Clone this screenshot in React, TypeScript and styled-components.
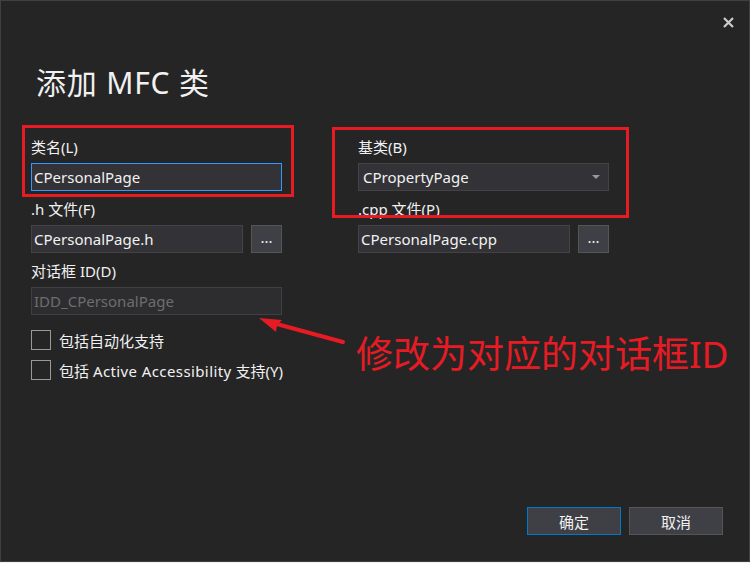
import * as React from "react";
import styled, { createGlobalStyle } from "styled-components";

const GlobalStyle = createGlobalStyle`
  html, body {
    margin: 0;
    padding: 0;
    background: #f0f0f0;
  }
  * {
    box-sizing: border-box;
  }
`;

const FONT = `"Noto Sans", "Noto Sans CJK SC", sans-serif`;
const RED = "#e61b24";

const Dialog = styled.div`
  position: relative;
  width: 750px;
  height: 562px;
  background: #252526;
  border: 1px solid #3f3f46;
  display: flex;
  flex-direction: column;
  font-family: ${FONT};
  color: #f1f1f1;
  font-size: 15px;
  overflow: hidden;
`;

const Header = styled.div`
  height: 40px;
  display: flex;
  justify-content: flex-end;
  align-items: flex-start;
  padding: 15px 15px 0 0;
`;

const CloseButton = styled.button`
  width: 12px;
  height: 12px;
  padding: 0;
  border: none;
  background: transparent;
  display: flex;
  align-items: center;
  justify-content: center;
`;

const Title = styled.h1`
  margin: 22px 0 0 35px;
  font-size: 30px;
  letter-spacing: 0.8px;
  line-height: 40px;
  font-weight: 400;
  color: #f1f1f1;
`;

const Form = styled.div`
  display: grid;
  grid-template-columns: 251px 251px;
  column-gap: 76px;
  padding-left: 30px;
  margin-top: 34px;
  align-items: start;
`;

const Column = styled.div`
  display: flex;
  flex-direction: column;
  gap: 8px;
`;

const Field = styled.div`
  display: flex;
  flex-direction: column;
  gap: 6px;
`;

const Label = styled.div`
  height: 20px;
  line-height: 20px;
  white-space: nowrap;
`;

const Row = styled.div`
  display: flex;
  gap: 8px;
`;

const TextBox = styled.div<{ $focused?: boolean; $disabled?: boolean }>`
  flex: 1;
  height: 28px;
  line-height: 26px;
  padding-left: 2px;
  background: ${(p) => (p.$disabled ? "#2d2d30" : "#333337")};
  border: 1px solid
    ${(p) => (p.$focused ? "#3399ff" : p.$disabled ? "#3f3f46" : "#434346")};
  color: ${(p) => (p.$disabled ? "#6d6d6d" : "#f1f1f1")};
  white-space: nowrap;
  overflow: hidden;
`;

const Combo = styled(TextBox)`
  display: flex;
  justify-content: space-between;
  align-items: center;
  padding: 0 8px 0 4px;
`;

const Caret = styled.span`
  width: 0;
  height: 0;
  border-left: 4px solid transparent;
  border-right: 4px solid transparent;
  border-top: 4px solid #999999;
`;

const BrowseButton = styled.div`
  width: 31px;
  height: 28px;
  background: #3f3f46;
  border: 1px solid #555555;
  color: #f1f1f1;
  text-align: center;
  line-height: 22px;
  font-size: 15px;
`;

const Checks = styled.div`
  display: flex;
  flex-direction: column;
  gap: 10px;
  padding-left: 30px;
  margin-top: 15px;
`;

const CheckRow = styled.label`
  display: flex;
  align-items: center;
  gap: 8px;
  height: 20px;
  white-space: nowrap;
`;

const Latin = styled.span`
  letter-spacing: 0.4px;
`;

const CheckBox = styled.span`
  width: 20px;
  height: 20px;
  border: 1px solid #999999;
  background: #252526;
`;

const Footer = styled.div`
  margin-top: auto;
  display: flex;
  justify-content: flex-end;
  gap: 8px;
  padding: 0 26px 26px 0;
`;

const DialogButton = styled.button<{ $primary?: boolean }>`
  width: 94px;
  height: 28px;
  background: #3f3f46;
  border: 1px solid ${(p) => (p.$primary ? "#007acc" : "#555555")};
  color: #f1f1f1;
  font-family: ${FONT};
  font-size: 15px;
  padding: 0;
`;

const Highlight = styled.div<{ $x: number; $y: number; $w: number; $h: number }>`
  position: absolute;
  left: ${(p) => p.$x}px;
  top: ${(p) => p.$y}px;
  width: ${(p) => p.$w}px;
  height: ${(p) => p.$h}px;
  border: 3px solid ${RED};
  pointer-events: none;
`;

const Note = styled.div`
  position: absolute;
  left: 355px;
  top: 334px;
  font-size: 37px;
  line-height: 37px;
  color: ${RED};
  white-space: nowrap;
`;

const ArrowSvg = styled.svg`
  position: absolute;
  left: 0;
  top: 0;
  pointer-events: none;
`;

const CloseIcon = () => (
  <svg width="11" height="11" viewBox="0 0 11 11">
    <path d="M1 1 L10 10 M10 1 L1 10" stroke="#cccccc" strokeWidth="2.2" />
  </svg>
);

export default function App() {
  return (
    <>
      <GlobalStyle />
      <Dialog>
        <Header>
          <CloseButton aria-label="close">
            <CloseIcon />
          </CloseButton>
        </Header>
        <Title>添加 MFC 类</Title>
        <Form>
          <Column>
            <Field>
              <Label>类名(L)</Label>
              <TextBox $focused>CPersonalPage</TextBox>
            </Field>
            <Field>
              <Label>.h 文件(F)</Label>
              <Row>
                <TextBox>CPersonalPage.h</TextBox>
                <BrowseButton>...</BrowseButton>
              </Row>
            </Field>
            <Field>
              <Label>对话框 ID(D)</Label>
              <TextBox $disabled>IDD_CPersonalPage</TextBox>
            </Field>
          </Column>
          <Column>
            <Field>
              <Label>基类(B)</Label>
              <Combo>
                <span>CPropertyPage</span>
                <Caret />
              </Combo>
            </Field>
            <Field>
              <Label>.cpp 文件(P)</Label>
              <Row>
                <TextBox>CPersonalPage.cpp</TextBox>
                <BrowseButton>...</BrowseButton>
              </Row>
            </Field>
          </Column>
        </Form>
        <Checks>
          <CheckRow>
            <CheckBox />
            包括自动化支持
          </CheckRow>
          <CheckRow>
            <CheckBox />
            <span>
              包括 <Latin>Active Accessibility</Latin> 支持(Y)
            </span>
          </CheckRow>
        </Checks>
        <Footer>
          <DialogButton $primary>确定</DialogButton>
          <DialogButton>取消</DialogButton>
        </Footer>

        <Highlight $x={21} $y={124} $w={272} $h={72} />
        <Highlight $x={331} $y={126} $w={297} $h={91} />
        <ArrowSvg width="750" height="562">
          <line x1="272" y1="322" x2="342" y2="341" stroke={RED} strokeWidth="4" strokeLinecap="round" />
          <polygon points="258,317 281,319 276,324 275,331" fill={RED} />
        </ArrowSvg>
        <Note>修改为对应的对话框ID</Note>
      </Dialog>
    </>
  );
}
